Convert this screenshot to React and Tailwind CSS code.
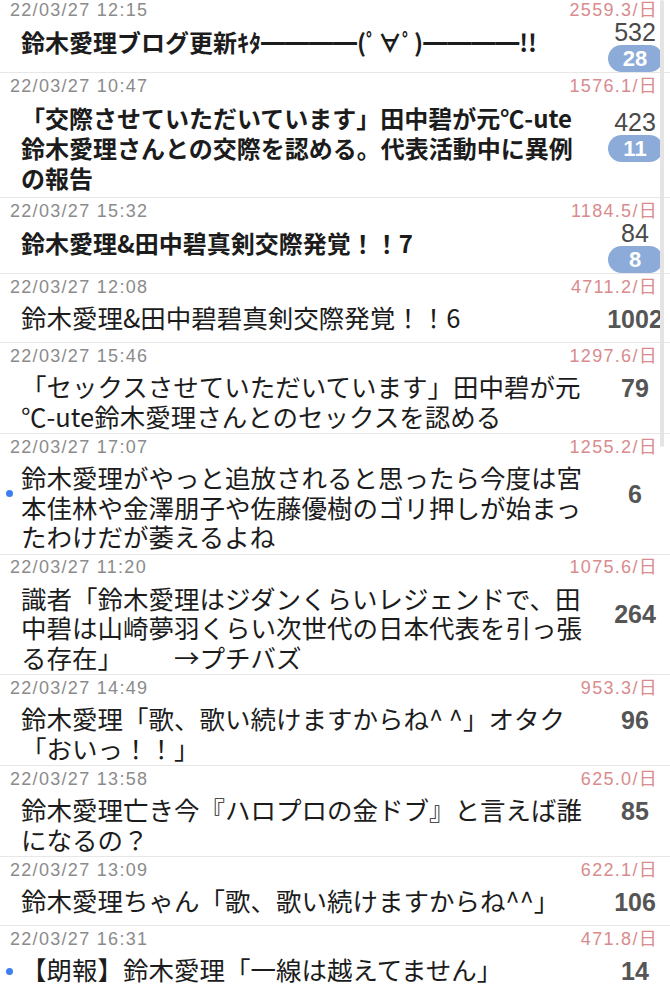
import React from "react";

const rows = [
  { date: "22/03/27 12:15", rate: "2559.3/日", title: "鈴木愛理ブログ更新ｷﾀ━━━━(ﾟ∀ﾟ)━━━━!!", count: "532", badge: "28", bold: true },
  { date: "22/03/27 10:47", rate: "1576.1/日", title: "「交際させていただいています」田中碧が元\u200B℃-ute鈴木愛理さんとの交際を認める。代表活動中に異例の報告", count: "423", badge: "11", bold: true },
  { date: "22/03/27 15:32", rate: "1184.5/日", title: "鈴木愛理&田中碧真剣交際発覚！！7", count: "84", badge: "8", bold: true },
  { date: "22/03/27 12:08", rate: "4711.2/日", title: "鈴木愛理&田中碧碧真剣交際発覚！！6", count: "1002" },
  { date: "22/03/27 15:46", rate: "1297.6/日", title: "「セックスさせていただいています」田中碧が元\u200B℃-ute鈴木愛理さんとのセックスを認める", count: "79" },
  { date: "22/03/27 17:07", rate: "1255.2/日", title: "鈴木愛理がやっと追放されると思ったら今度は宮本佳林や金澤朋子や佐藤優樹のゴリ押しが始まったわけだが萎えるよね", count: "6", dot: true },
  { date: "22/03/27 11:20", rate: "1075.6/日", title: "識者「鈴木愛理はジダンくらいレジェンドで、田中碧は山崎夢羽くらい次世代の日本代表を引っ張る存在」　　→プチバズ", count: "264" },
  { date: "22/03/27 14:49", rate: "953.3/日", title: "鈴木愛理「歌、歌い続けますからね^ ^」オタク「おいっ！！」", count: "96" },
  { date: "22/03/27 13:58", rate: "625.0/日", title: "鈴木愛理亡き今『ハロプロの金ドブ』と言えば誰になるの？", count: "85" },
  { date: "22/03/27 13:09", rate: "622.1/日", title: "鈴木愛理ちゃん「歌、歌い続けますからね^^」", count: "106" },
  { date: "22/03/27 16:31", rate: "471.8/日", title: "【朗報】鈴木愛理「一線は越えてません」", count: "14", dot: true },
];

function Row({ r }) {
  return (
    <div className="grid grid-cols-[21px_1fr_58px] grid-rows-[26px_auto] pr-[6px] border-b border-[#e7e7e7]">
      <div className="col-start-1 col-span-3 row-start-1 flex items-center justify-between h-[26px] pl-[10px] pr-[6px] font-['Liberation_Sans','Noto_Sans_CJK_JP',sans-serif] text-[18px] tracking-[1.3px]">
        <span className="text-[#8b8b8b]">{r.date}</span>
        <span className="text-[#d98b8d]">{r.rate}</span>
      </div>

      <div className="col-start-1 row-start-1 row-span-2 flex flex-col">
        <div className="flex-1 min-h-[22px]" />
        <div className={`${r.badge ? "h-[53px]" : "h-[46px]"} flex items-center pl-[6px]`}>
          {r.dot && <div className="w-[7px] h-[7px] rounded-full bg-[#3d7ef3]" />}
        </div>
        <div className="flex-1" />
      </div>

      <div
        className={
          r.bold
            ? "col-start-2 row-start-2 pr-[20px] mt-[4px] pb-[4px] text-[24px] leading-[30px] font-bold text-[#1c1c1c] [text-spacing-trim:space-all]"
            : "col-start-2 row-start-2 pr-[20px] mt-[2px] pb-[3px] text-[25.5px] leading-[29.5px] text-[#1c1c1c] [text-spacing-trim:space-all]"
        }
      >
        {r.title}
      </div>

      <div className="col-start-3 row-start-1 row-span-2 flex flex-col items-center font-['Liberation_Sans',sans-serif]">
        <div className="flex-1 min-h-[22px]" />
        {r.badge ? (
          <div className="flex flex-col items-center">
            <div className="text-[25px] leading-[26px] text-[#4a4a4a]">{r.count}</div>
            <div className="w-[55px] h-[27px] rounded-full bg-[#8dabd8] text-white font-bold text-[22px] leading-[27px] text-center">
              {r.badge}
            </div>
          </div>
        ) : (
          <div className="text-[25px] leading-[46px] font-bold text-[#555555]">{r.count}</div>
        )}
        <div className="flex-1" />
      </div>
    </div>
  );
}

export default function App() {
  return (
    <div className="relative w-[670px] h-[989px] overflow-hidden bg-white font-['Noto_Sans_CJK_JP',sans-serif]">
      <div className="-mt-[3px]">
        {rows.map((r, i) => (
          <Row key={i} r={r} />
        ))}
      </div>
      <div className="absolute top-0 right-[6px] w-[4px] h-[447px] rounded-full bg-[#e4e4e4]" />
    </div>
  );
}
